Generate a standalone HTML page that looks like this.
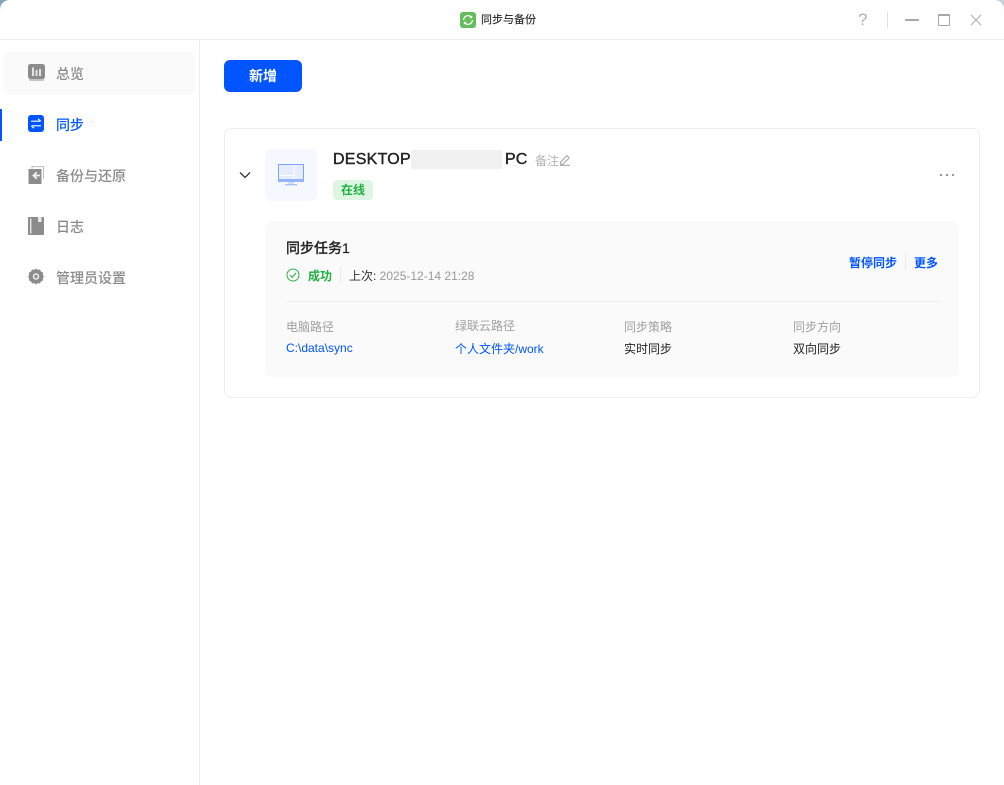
<!DOCTYPE html>
<html lang="zh">
<head>
<meta charset="utf-8">
<style>
html,body{margin:0;padding:0;width:1004px;height:785px;overflow:hidden;background:#fff}
body{position:relative;font-family:"Liberation Sans","Noto Sans CJK SC",sans-serif;color:#222;filter:blur(.25px)}
.a{position:absolute;white-space:nowrap}
.nav{left:56px;font-size:14px;line-height:20px;color:#8a8a8a;font-weight:500}
svg{position:absolute;display:block}
.lab{font-size:12px;line-height:18px;color:#a0a0a0;top:318px}
.val{font-size:12px;line-height:18px;top:340px;color:#222}
.blue{color:#0055ff}
</style>
</head>
<body>
<!-- window corners -->
<svg style="left:0;top:0" width="10" height="10"><path d="M0 0H10C4 0 0 4 0 10Z" fill="#7fa6bd"/></svg>
<svg style="right:0;top:0" width="10" height="10"><path d="M10 0H0C6 0 10 4 10 10Z" fill="#c4d2da"/></svg>

<!-- title bar -->
<div class="a" style="left:0;top:39px;width:1004px;height:1px;background:#eeeeee"></div>
<svg style="left:460px;top:12px" width="16" height="16" viewBox="0 0 16 16">
<rect width="16" height="16" rx="3" fill="#63bd5a"/>
<path d="M3.6 8A4.4 4.4 0 0 1 11.2 5M12.4 8A4.4 4.4 0 0 1 4.8 11" fill="none" stroke="#fff" stroke-width="1.3"/>
<path d="M12.2 3.4V6.2H9.4Z M3.8 12.6V9.8H6.6Z" fill="#fff"/>
</svg>
<div class="a" style="left:481px;top:12px;font-size:11px;line-height:17px;font-weight:500;color:#333">同步与备份</div>
<div class="a" style="left:858px;top:10px;font-size:17px;line-height:20px;color:#b0b0b0">?</div>
<div class="a" style="left:887px;top:12px;width:1px;height:16px;background:#e2e2e2"></div>
<div class="a" style="left:905px;top:19px;width:14px;height:2px;background:#a6a6a6"></div>
<div class="a" style="left:938px;top:14px;width:10px;height:9px;border:1px solid #a6a6a6;border-top:2px solid #a6a6a6;border-radius:1px"></div>
<svg style="left:970px;top:14px" width="12" height="12" viewBox="0 0 12 12"><path d="M1 1L11 11M11 1L1 11" stroke="#aaa" stroke-width="1" fill="none"/></svg>

<!-- sidebar -->
<div class="a" style="left:199px;top:40px;width:1px;height:745px;background:#eeeeee"></div>
<div class="a" style="left:4px;top:52px;width:191px;height:43px;border-radius:6px;background:#fafafa"></div>
<div class="a" style="left:0;top:109px;width:2px;height:32px;background:#0055ff"></div>

<svg style="left:28px;top:64px" width="17" height="17" viewBox="0 0 17 17">
<rect x="1" y="12" width="15" height="5" rx="1" fill="#c4c4c4"/>
<rect width="17" height="15" rx="2.5" fill="#8c8c8c"/>
<path d="M4 3.5h2V12H4zM7.5 6h2v6h-2zM11 5h2v7h-2z" fill="#e4e4e4"/>
</svg>
<div class="a nav" style="top:64px">总览</div>

<svg style="left:28px;top:115px" width="16" height="17" viewBox="0 0 16 17">
<rect width="16" height="17" rx="3" fill="#0055ff"/>
<path d="M3 6.2H12.5M10 3.8L12.7 6.2M13 10.8H3.5M6 13.2L3.3 10.8" stroke="#fff" stroke-width="1.2" fill="none"/>
</svg>
<div class="a nav" style="top:115px;color:#0055ff">同步</div>

<svg style="left:28px;top:166px" width="16" height="18" viewBox="0 0 16 18">
<path d="M4 2.5V.6H15.5V13" fill="none" stroke="#bdbdbd" stroke-width="1"/>
<rect x="0.5" y="3" width="13" height="15" fill="#8c8c8c"/>
<path d="M12 9.5H6M8.8 6.3L5.5 9.5L8.8 12.7" stroke="#f0f0f0" stroke-width="1.8" fill="none"/>
</svg>
<div class="a nav" style="top:166px">备份与还原</div>

<svg style="left:28px;top:217px" width="16" height="18" viewBox="0 0 16 18">
<rect width="16" height="18" rx="1" fill="#8c8c8c"/>
<rect x="2" y="1.5" width="1.4" height="15" fill="#e8e8e8"/>
<rect x="10" y="0" width="3.5" height="5" fill="#e8e8e8"/>
</svg>
<div class="a nav" style="top:217px">日志</div>

<svg style="left:28px;top:268px" width="16" height="17" viewBox="0 0 16 17">
<path d="M8 .5L9.8 1.9 12 1.5 13 3.6 15.2 4.6 14.8 6.8 16 8.5 14.8 10.2 15.2 12.4 13 13.4 12 15.5 9.8 15.1 8 16.5 6.2 15.1 4 15.5 3 13.4.8 12.4 1.2 10.2 0 8.5 1.2 6.8.8 4.6 3 3.6 4 1.5 6.2 1.9Z" fill="#8c8c8c"/>
<circle cx="8" cy="8.5" r="6.4" fill="#8c8c8c"/>
<circle cx="8" cy="8.5" r="3.2" fill="#efefef"/>
<circle cx="8" cy="8.5" r="1.7" fill="#8c8c8c"/>
</svg>
<div class="a nav" style="top:268px">管理员设置</div>

<!-- new button -->
<div class="a" style="left:224px;top:60px;width:78px;height:32px;line-height:32px;border-radius:6px;background:#0055ff;color:#fff;text-align:center;font-size:14px;font-weight:700">新增</div>

<!-- card -->
<div class="a" style="left:224px;top:128px;width:754px;height:268px;border:1px solid #eeeeee;border-radius:8px;background:#fff"></div>
<svg style="left:239px;top:170px" width="12" height="10" viewBox="0 0 12 10"><path d="M1 2.5L6 7.5L11 2.5" fill="none" stroke="#333" stroke-width="1.3"/></svg>
<div class="a" style="left:265px;top:149px;width:52px;height:52px;border-radius:7px;background:#f5f8ff"></div>
<svg style="left:278px;top:163px" width="26" height="24" viewBox="0 0 26 24">
<rect x="0" y="1" width="26" height="18" fill="#e4ecfd"/>
<path d="M.5 1.5H25.5V18.5H.5Z" fill="none" stroke="#7da4fb" stroke-width="1"/>
<path d="M1 12.5H16M16 2V16" stroke="#fff" stroke-width="1"/>
<rect x="0" y="16" width="26" height="3" fill="#94b5fb"/>
<rect x="10" y="19" width="6" height="2" fill="#d3e0fc"/>
<rect x="7" y="21" width="12" height="1.4" fill="#a4c1fc"/>
</svg>

<div class="a" style="left:333px;top:150px;font-size:16px;line-height:20px;font-weight:500;letter-spacing:.25px;color:#222;-webkit-text-stroke:.4px #222">DESKTOP</div>
<div class="a" style="left:411px;top:150px;width:91px;height:19px;background:#f1f1f1"></div>
<div class="a" style="left:505px;top:150px;font-size:16px;line-height:20px;font-weight:500;letter-spacing:.1px;color:#222;-webkit-text-stroke:.4px #222">PC</div>
<div class="a" style="left:535px;top:152px;font-size:12px;line-height:18px;color:#b5b5b5">备注</div>
<svg style="left:559px;top:154px" width="12" height="12" viewBox="0 0 12 12"><path d="M1.5 8.2L8 1.7L10.2 3.9L3.8 10.3H1.5ZM1 11.3H11" fill="none" stroke="#aaa" stroke-width="1.1"/></svg>
<div class="a" style="left:333px;top:180px;width:40px;height:20px;line-height:20px;border-radius:4px;background:#dff5e3;color:#1fb03f;font-size:12px;font-weight:700;text-align:center">在线</div>
<svg style="left:939px;top:173px" width="16" height="4" viewBox="0 0 16 4"><circle cx="2" cy="2" r="1" fill="#777"/><circle cx="8" cy="2" r="1" fill="#777"/><circle cx="14" cy="2" r="1" fill="#777"/></svg>

<!-- task panel -->
<div class="a" style="left:265px;top:221px;width:694px;height:156px;border-radius:8px;background:#fafafa"></div>
<div class="a" style="left:286px;top:239px;font-size:14px;line-height:18px;font-weight:500;color:#222;-webkit-text-stroke:.2px #222">同步任务1</div>
<svg style="left:286px;top:268px" width="14" height="14" viewBox="0 0 14 14"><circle cx="7" cy="7" r="6" fill="none" stroke="#2fb344" stroke-width="1"/><path d="M4 7.2L6.2 9.3L10 5" fill="none" stroke="#2fb344" stroke-width="1.1"/></svg>
<div class="a" style="left:308px;top:267px;font-size:12px;line-height:18px;font-weight:700;color:#1fb03f">成功</div>
<div class="a" style="left:340px;top:267px;width:1px;height:16px;background:#e8e8e8"></div>
<div class="a" style="left:349px;top:267px;font-size:12px;line-height:18px;color:#999"><span style="color:#333">上次:</span> 2025-12-14 21:28</div>
<div class="a blue" style="left:849px;top:254px;font-size:12px;line-height:18px;font-weight:700">暂停同步</div>
<div class="a" style="left:905px;top:254px;width:1px;height:16px;background:#e8e8e8"></div>
<div class="a blue" style="left:914px;top:254px;font-size:12px;line-height:18px;font-weight:700">更多</div>
<div class="a" style="left:286px;top:301px;width:653px;height:1px;background:#eeeeee"></div>

<div class="a lab" style="left:286px">电脑路径</div>
<div class="a val blue" style="left:286px;top:339px">C:\data\sync</div>
<div class="a lab" style="left:455px;top:317px">绿联云路径</div>
<div class="a val blue" style="left:455px">个人文件夹/work</div>
<div class="a lab" style="left:624px">同步策略</div>
<div class="a val" style="left:624px">实时同步</div>
<div class="a lab" style="left:793px">同步方向</div>
<div class="a val" style="left:793px">双向同步</div>
</body>
</html>
